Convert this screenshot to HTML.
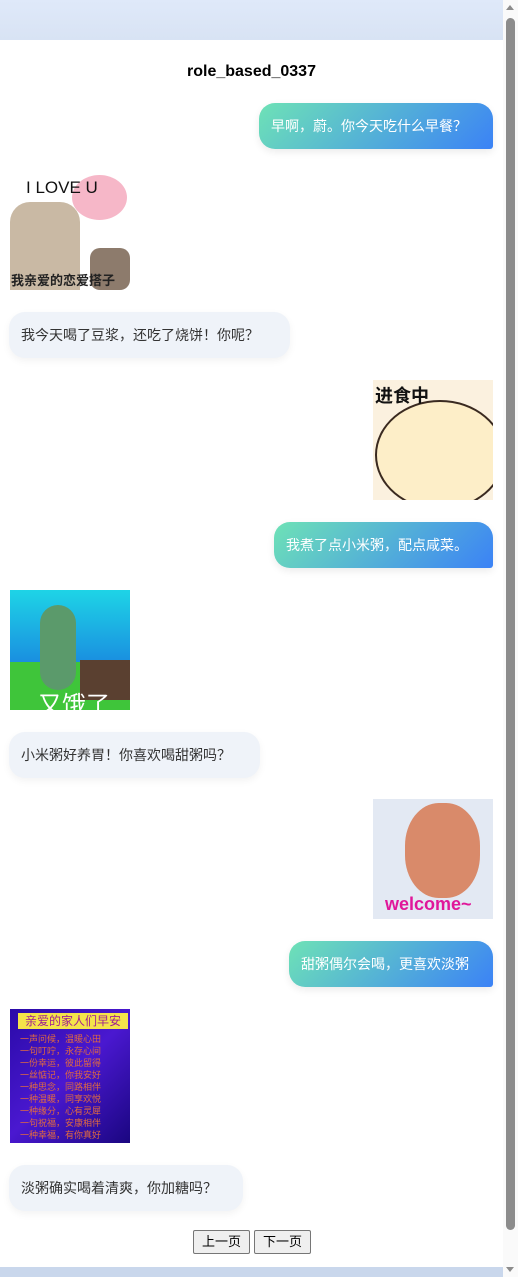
<!DOCTYPE html>
<html><head><meta charset="utf-8"><style>
*{margin:0;padding:0;box-sizing:border-box}
body{width:518px;height:1277px;overflow:hidden;background:#fff;font-family:"Liberation Sans","Noto Sans CJK SC",sans-serif;position:relative}
.top{position:absolute;left:0;top:0;width:503px;height:40px;background:linear-gradient(#dfe9f9,#d8e3f4)}
.bot{position:absolute;left:0;top:1267px;width:503px;height:10px;background:#c9d7ec}
.sb{position:absolute;left:503px;top:0;width:15px;height:1277px;background:#fafafa}
.thumb{position:absolute;left:506px;top:18px;width:9px;height:1212px;background:#8c8c8c;border-radius:5px}
.ar{position:absolute;left:506px;width:0;height:0;border-left:4.5px solid transparent;border-right:4.5px solid transparent}
.title{position:absolute;top:63px;left:0;width:503px;text-align:center;font-weight:bold;font-size:16px;color:#000}
.b{position:absolute;height:46px;line-height:46px;font-size:14px;padding:0 12px;white-space:nowrap}
.u{background:linear-gradient(135deg,#6ee2b6,#3b82f6);color:#fff;border-radius:16px 16px 3px 16px;box-shadow:0 3px 8px rgba(0,0,0,.08)}
.a{background:#eff3f9;color:#333;border-radius:16px;box-shadow:0 3px 8px rgba(0,0,0,.05)}
.img{position:absolute;width:120px;overflow:hidden}
.btn{position:absolute;top:1230px;height:24px;font-size:13px;line-height:22px;padding:0 8px;border:1px solid #767676;border-radius:2px;background:#efefef;color:#000}
</style></head><body>
<div class="top"></div><div class="bot"></div><div class="sb"></div><div class="thumb"></div>
<div class="ar" style="top:5px;border-bottom:5px solid #8c8c8c"></div>
<div class="ar" style="top:1267px;border-top:5px solid #8c8c8c"></div>
<div class="title">role_based_0337</div>
<div class="b u" style="left:259px;top:103px;width:234px">早啊，蔚。你今天吃什么早餐？</div>
<div class="img" style="left:10px;top:170px;height:120px;background:#fff">
 <div style="position:absolute;left:62px;top:5px;width:55px;height:45px;background:#f6b7c8;border-radius:50%"></div>
 <div style="position:absolute;left:0;top:32px;width:70px;height:88px;background:#c9b9a4;border-radius:20px 20px 0 0"></div>
 <div style="position:absolute;left:80px;top:78px;width:40px;height:42px;background:#8d7b6c;border-radius:10px"></div>
 <div style="position:absolute;left:16px;top:8px;font-size:17px;color:#111">I LOVE U</div>
 <div style="position:absolute;left:1px;top:100px;font-size:13px;font-weight:bold;color:#222">我亲爱的恋爱搭子</div>
</div>
<div class="b a" style="left:9px;top:312px;width:281px">我今天喝了豆浆，还吃了烧饼！你呢？</div>
<div class="img" style="left:373px;top:380px;height:120px;background:#fbf1df">
 <div style="position:absolute;left:2px;top:20px;width:130px;height:110px;background:#fdeec8;border:2px solid #3a2a20;border-radius:50%"></div>
 <div style="position:absolute;left:2px;top:2px;font-size:18px;font-weight:bold;color:#111">进食中</div>
</div>
<div class="b u" style="left:274px;top:522px;width:219px">我煮了点小米粥，配点咸菜。</div>
<div class="img" style="left:10px;top:590px;height:120px;background:linear-gradient(#1ed4e6,#1a8fe0 60%,#3fc53a 60%)">
 <div style="position:absolute;left:30px;top:15px;width:36px;height:85px;background:#5b9a6b;border-radius:18px"></div>
 <div style="position:absolute;left:70px;top:70px;width:50px;height:40px;background:#5a4030"></div>
 <div style="position:absolute;left:28px;top:95px;font-size:24px;color:#fff">又饿了</div>
</div>
<div class="b a" style="left:9px;top:732px;width:251px">小米粥好养胃！你喜欢喝甜粥吗？</div>
<div class="img" style="left:373px;top:799px;height:120px;background:#e3e9f3">
 <div style="position:absolute;left:32px;top:4px;width:75px;height:95px;background:#d98a6a;border-radius:45%"></div>
 <div style="position:absolute;left:12px;top:95px;font-size:18px;font-weight:bold;color:#e0179a">welcome~</div>
</div>
<div class="b u" style="left:289px;top:941px;width:204px">甜粥偶尔会喝，更喜欢淡粥</div>
<div class="img" style="left:10px;top:1009px;height:134px;background:linear-gradient(135deg,#2a0aa8,#4a18d0,#1a0680)">
 <div style="position:absolute;left:8px;top:4px;width:110px;height:16px;background:#f4e44a;font-size:12px;line-height:16px;color:#a02090;text-align:center">亲爱的家人们早安</div>
 <div style="position:absolute;left:10px;top:24px;width:100px;font-size:9px;line-height:12px;color:#e06a40">一声问候，温暖心田<br>一句叮咛，永存心间<br>一份幸运，彼此留得<br>一丝惦记，你我安好<br>一种思念，同路相伴<br>一种温暖，同享欢悦<br>一种缘分，心有灵犀<br>一句祝福，安康相伴<br>一种幸福，有你真好</div>
</div>
<div class="b a" style="left:9px;top:1165px;width:234px">淡粥确实喝着清爽，你加糖吗？</div>
<div class="btn" style="left:193px">上一页</div>
<div class="btn" style="left:254px">下一页</div>
</body></html>
